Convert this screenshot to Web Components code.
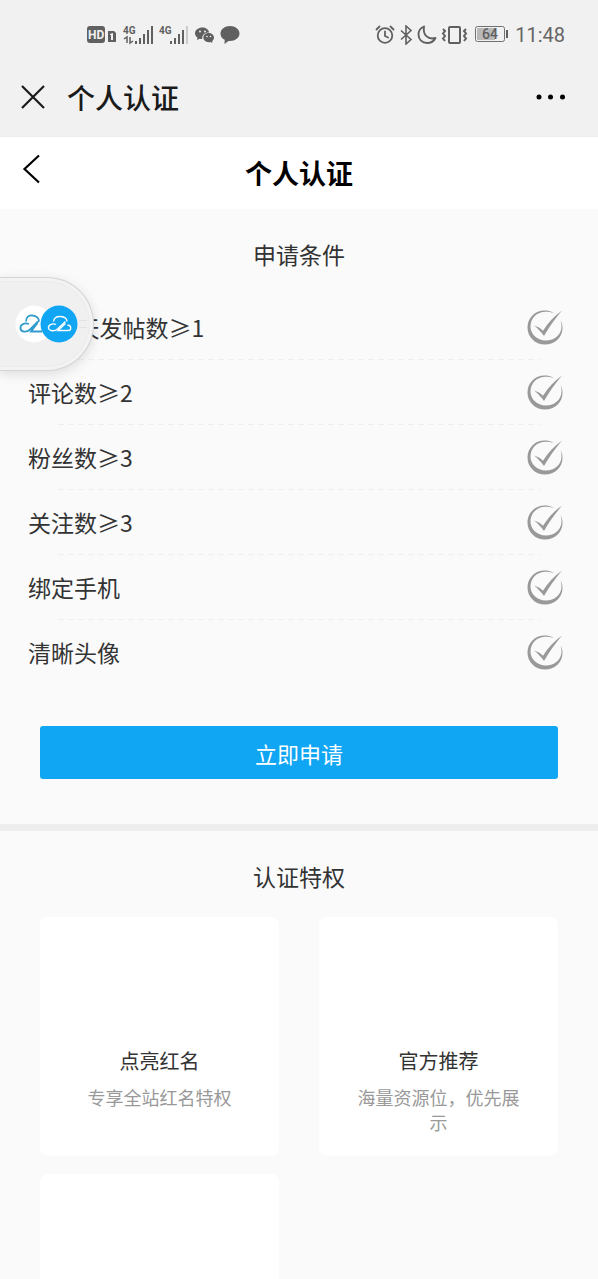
<!DOCTYPE html>
<html lang="zh-CN">
<head>
<meta charset="utf-8">
<meta name="viewport" content="width=device-width, initial-scale=1">
<title>个人认证</title>
<style>
  html, body { margin: 0; height: 100%; }
  body {
    font-family: "Noto Sans CJK SC", sans-serif;
    color: #333;
    background: #fafafa;
  }
</style>
</head>
<body>
<verify-app></verify-app>

<template id="status-bar">
  <style>
    :host { display: flex; justify-content: space-between; align-items: center; box-sizing: border-box; height: 68px; padding: 2px 33px 0 86px; color: #666; background: #f1f1f1; }
    .group { display: flex; align-items: center; }
    .left { gap: 6px; }
    .right { gap: 3px; }
    svg { display: block; flex: none; }
    text { font-family: Roboto, sans-serif; font-weight: 700; fill: #606060; }
    time { font: 20px/24px Roboto, sans-serif; margin-left: 3px; }
  </style>
  <div class="group left">
    <svg width="31" height="20" viewBox="0 0 31 20" aria-hidden="true">
      <rect x="1" y="1" width="18" height="17" rx="3" fill="#606060"/>
      <text x="2" y="14" style="font-size:12px;fill:#f1f1f1">HD</text>
      <path d="M22 6h6l2 2v9h-8z" fill="#606060"/>
      <path d="M24 9l3-1v7h-2v-5h-1z" fill="#f1f1f1"/>
    </svg>
    <svg width="30" height="20" viewBox="0 0 30 20" aria-hidden="true">
      <text x="0" y="9" style="font-size:10px">4G</text>
      <path d="M1 14l3-2v6M7 12v6l3-2" fill="none" stroke="#606060" stroke-width="1.500"/>
      <path d="M12 16h2v3h-2zM16 13h2v6h-2zM20 9h2v10h-2zM24 5h2v14h-2zM28 1h2v18h-2z" fill="#606060"/>
    </svg>
    <svg width="30" height="20" viewBox="0 0 30 20" aria-hidden="true">
      <text x="0" y="9" style="font-size:10px">4G</text>
      <path d="M11 16h2v3h-2zM15 13h2v6h-2zM19 9h2v10h-2zM23 5h2v14h-2z" fill="#606060"/>
      <path d="M27 1h2v18h-2z" fill="#ccc"/>
    </svg>
    <svg width="19" height="20" viewBox="0 0 19 20" aria-hidden="true">
      <path d="M7.500 2.500C3.400 2.500 0 5 0 8.300c0 1.900 1 3.400 2.500 4.500L2 15l2.700-1.300c.9.200 1.700.3 2.500.3-.5-4 2.600-6.500 7-6.500-.6-3-3.500-5-6.700-5z" fill="#606060"/>
      <path d="M19 12.500C19 10 16.500 8 13.600 8s-5.300 2-5.300 4.600 2.300 4.600 5.300 4.600c.7 0 1.300-.1 1.900-.3l2 1.100-.4-1.800c1.200-.9 1.900-2.200 1.900-3.700z" fill="#606060"/>
      <g fill="#f1f1f1"><circle cx="5" cy="6.500" r="1"/><circle cx="10" cy="6.500" r="1"/><circle cx="12" cy="11.500" r=".8"/><circle cx="15.500" cy="11.500" r=".8"/></g>
    </svg>
    <svg width="20" height="20" viewBox="0 0 20 20" aria-hidden="true">
      <path d="M10 1c5.200 0 9.500 3.200 9.500 7.500S15.200 16 10 16l-1.500-.1L4.500 19l.2-4.200C2 13.500.5 11.200.5 8.500.5 4.200 4.800 1 10 1z" fill="#606060"/>
    </svg>
  </div>
  <div class="group right">
    <svg width="20" height="20" viewBox="0 0 20 20" fill="none" stroke="#606060" stroke-width="1.800" stroke-linecap="round" aria-hidden="true">
      <circle cx="10" cy="10.500" r="7.300"/><path d="M10 6.500v4.500l3 1.500M1.500 4.500l3-3M18.500 4.500l-3-3"/>
    </svg>
    <svg width="16" height="20" viewBox="0 0 16 20" fill="none" stroke="#606060" stroke-width="1.600" aria-hidden="true">
      <path d="M3 5.500l10 9-5 4.500V1l5 4.500-10 9"/>
    </svg>
    <svg width="20" height="20" viewBox="0 0 20 20" fill="none" stroke="#606060" stroke-width="1.900" stroke-linejoin="round" aria-hidden="true">
      <path d="M7 1.500C3.500 3 1.500 6 1.500 9.500c0 5 3.800 8.500 8.500 8.500 4 0 7-2 8.500-5C11 15 5.500 10 7 1.500z"/>
    </svg>
    <svg width="28" height="20" viewBox="0 0 28 20" fill="none" stroke="#606060" stroke-width="2" aria-hidden="true">
      <rect x="9" y="2" width="11" height="16" rx="1"/>
      <path d="M3 4l2 2-2 2.500L5 11l-2 2.500L5 16M26 4l-2 2 2 2.500L24 11l2 2.500-2 2.500"/>
    </svg>
    <svg width="38" height="20" viewBox="0 0 38 20" aria-hidden="true">
      <rect x="4.500" y="1.500" width="29" height="15" rx="2" fill="none" stroke="#707070"/>
      <rect x="6" y="3" width="18" height="12" fill="#b9b9b9"/>
      <path d="M35 5h2v8h-2z" fill="#606060"/>
      <text x="11" y="14" style="font-size:14px;font-weight:500">64</text>
    </svg>
    <time>11:48</time>
  </div>
</template>

<template id="browser-bar">
  <style>
    :host { display: flex; align-items: center; height: 69px; padding: 0 31px 10px 20px; box-sizing: border-box; background: #f1f1f1; color: #1a1a1a; border-bottom: 1px solid #ededed; }
    button { display: flex; padding: 0; border: 0; background: none; color: inherit; }
    .title { flex: 1; margin-left: 20px; font-size: 28px; line-height: 40px; font-weight: 500; }
  </style>
  <button type="button" aria-label="关闭">
    <svg width="27" height="28" viewBox="0 0 27 28" fill="none" stroke="currentColor" stroke-width="2.200"><path d="M2 3l22 22M24 3L2 25"/></svg>
  </button>
  <span class="title"><slot></slot></span>
  <button type="button" aria-label="更多">
    <svg width="32" height="28" viewBox="0 0 32 28" fill="#000"><circle cx="4" cy="14" r="2.500"/><circle cx="15.500" cy="14" r="2.500"/><circle cx="27.500" cy="14" r="2.500"/></svg>
  </button>
</template>

<template id="page-nav">
  <style>
    :host { display: grid; grid-template-columns: 1fr auto 1fr; align-items: center; height: 72px; padding: 0 22px; background: #fff; color: #000; }
    button { display: flex; justify-self: start; padding: 0 0 8px; border: 0; background: none; color: inherit; }
    h1 { margin: 0; font-size: 27px; line-height: 40px; font-weight: 700; }
  </style>
  <button type="button" aria-label="返回">
    <svg width="20" height="30" viewBox="0 0 20 30" fill="none" stroke="currentColor" stroke-width="2.200"><path d="M17 1.500L2.500 15 17 28.500"/></svg>
  </button>
  <h1><slot></slot></h1>
</template>

<template id="section-title">
  <style>
    :host { display: block; text-align: center; }
    h2 { margin: 0; font-size: 23px; line-height: 34px; font-weight: 400; }
  </style>
  <h2><slot></slot></h2>
</template>

<template id="condition-row">
  <style>
    :host { display: block; padding: 0 34px 0 28px; }
    .row { display: flex; justify-content: space-between; align-items: center; height: 64px; font-size: 23px; line-height: 34px; }
    .line { height: 1px; margin: 0 24px 0 30px; background: repeating-linear-gradient(90deg, #efefef 0 6px, transparent 6px 10px); }
    :host(:last-child) .line { background: none; }
    svg { display: block; }
  </style>
  <div class="row">
    <span><slot></slot></span>
    <svg width="38" height="36" viewBox="0 0 38 36" role="img" aria-label="未达成">
      <path fill="#999" fill-rule="evenodd" d="M28 4C24.500 1.800 21.500 1.500 18.500 1.500 9 1.500 1.500 9 1.500 18.500S9 35.500 19 35.500 36.500 28 36.500 19c0-3-.7-5.500-2-8 .8 2.500 1 4.500 1 6.500 0 8-6.800 14-15.700 14C11 31.500 4.500 25 4.500 17.500 4.500 9.500 10.500 3.300 18.500 2.700c3.300-.1 6.300.3 9.500 1.300z"/>
      <path fill="#999" d="M8 16.500c3.500 1 6.500 2.800 9 5.300C22 14 28 7 36 1.500 29 10 23 18 18 27 15 23 12 19.500 8 16.500z"/>
    </svg>
  </div>
  <div class="line"></div>
</template>

<template id="apply-button">
  <style>
    :host { display: block; padding: 0 40px; }
    button { display: block; width: 100%; padding: 11px 0 10px; border: 0; border-radius: 3px; background: #10a6f4; color: #fff; font: inherit; font-size: 22px; line-height: 32px; }
  </style>
  <button type="button"><slot></slot></button>
</template>

<template id="privilege-card">
  <style>
    :host { display: block; box-sizing: border-box; aspect-ratio: 1; padding: 129px 36px 0; border-radius: 8px; background: #fff; text-align: center; }
    h3 { margin: 0 0 9px; font-size: 20px; line-height: 30px; font-weight: 400; }
    p { margin: 0; font-size: 18px; line-height: 25px; color: #999; }
  </style>
  <h3><slot name="title"></slot></h3>
  <p><slot></slot></p>
</template>

<template id="floating-tab">
  <style>
    :host { display: block; width: 94px; height: 94px; box-sizing: border-box; padding: 3px 3px 3px 0; border: 1px solid #d4d4d4; border-left: 0; border-radius: 0 47px 47px 0; background: #f3f3f3; box-shadow: 0 3px 12px rgba(0,0,0,.12); }
    button { display: flex; align-items: center; width: 100%; height: 100%; padding: 0 0 0 15px; border: 1px solid #ebebeb; border-left: 0; border-radius: 0 43px 43px 0; background: #f0f0f0; }
    svg { display: block; }
  </style>
  <button type="button" aria-label="浮窗">
    <svg width="72" height="38" viewBox="0 0 72 38" fill="none">
      <circle cx="19" cy="19" r="18.500" fill="#fff"/>
      <g stroke="#319bcb" stroke-width="1.800" transform="translate(-28 0)">
        <path d="M39 16.500C39 12 42 10 45.500 10.500c4 .3 6.500 3 6.500 6M42 19c-5-2-9 1-8.500 4.500.5 4 6.500 4 9.500 1l9-9M50.500 18l-6.500 8.500h11"/>
      </g>
      <circle cx="44" cy="19" r="18.500" fill="#10a6f4"/>
      <g stroke="#fff" stroke-width="1.300">
        <path d="M38.500 16.500C39 13 42 11.300 45.500 11.500c4 .3 6.500 2.300 6.500 5M41 19.500c-4-1.500-8 .5-7.500 3.500.5 3.500 6.500 3.500 9 1l8-7.500M50.500 18.500l-7.500 7h10c3.500 0 4-5-.5-5.500"/>
      </g>
      <path d="M64 15.500h8M64 22.500h8" stroke="#e2e2e2"/>
    </svg>
  </button>
</template>

<template id="verify-app">
  <style>
    :host { position: relative; display: flex; flex-direction: column; height: 100%; overflow: hidden; }
    status-bar, browser-bar, page-nav { flex: none; }
    main { flex: 1; min-height: 0; overflow-y: auto; scrollbar-width: none; }
    .conditions { padding: 28px 0 45px; border-bottom: 7px solid #eee; }
    .list { padding: 24px 0 41px; }
    .privileges { padding: 28px 40px 40px; }
    .cards { display: grid; grid-template-columns: 1fr 1fr; gap: 18px 40px; padding-top: 24px; }
    floating-tab { position: absolute; left: 0; top: 277px; }
  </style>
  <status-bar></status-bar>
  <browser-bar>个人认证</browser-bar>
  <page-nav>个人认证</page-nav>
  <main>
    <section class="conditions">
      <section-title>申请条件</section-title>
      <div class="list">
        <condition-row>近30天发帖数≥1</condition-row>
        <condition-row>评论数≥2</condition-row>
        <condition-row>粉丝数≥3</condition-row>
        <condition-row>关注数≥3</condition-row>
        <condition-row>绑定手机</condition-row>
        <condition-row>清晰头像</condition-row>
      </div>
      <apply-button>立即申请</apply-button>
    </section>
    <section class="privileges">
      <section-title>认证特权</section-title>
      <div class="cards">
        <privilege-card><span slot="title">点亮红名</span>专享全站红名特权</privilege-card>
        <privilege-card><span slot="title">官方推荐</span>海量资源位，优先展示</privilege-card>
        <privilege-card></privilege-card>
      </div>
    </section>
  </main>
  <floating-tab></floating-tab>
</template>

<script>
  class TemplateElement extends HTMLElement {
    constructor() {
      super();
      const template = document.getElementById(this.localName);
      this.attachShadow({ mode: "open" }).append(template.content.cloneNode(true));
    }
  }
  for (const name of ["status-bar", "browser-bar", "page-nav", "section-title", "condition-row", "apply-button", "privilege-card", "floating-tab", "verify-app"]) {
    customElements.define(name, class extends TemplateElement {});
  }
</script>
</body>
</html>
